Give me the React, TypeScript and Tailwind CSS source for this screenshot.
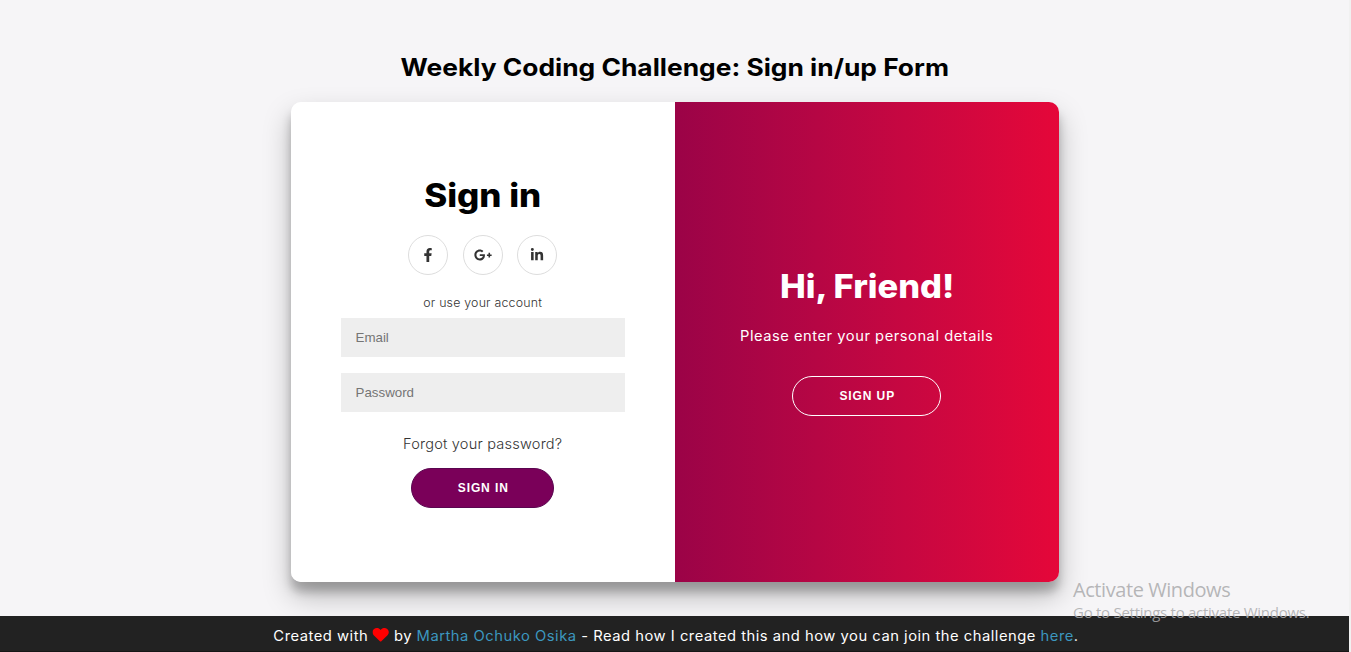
import { FaFacebookF, FaGooglePlusG, FaHeart, FaLinkedinIn } from "react-icons/fa";

const socials = [
  { name: "Facebook", Icon: FaFacebookF, size: 14 },
  { name: "Google Plus", Icon: FaGooglePlusG, size: 18 },
  { name: "LinkedIn", Icon: FaLinkedinIn, size: 14 },
];

function SignInForm() {
  return (
    <form className="flex w-1/2 flex-col items-center bg-white px-[50px] pt-[74px]">
      <h1 className="h-10 scale-x-[1.09] whitespace-nowrap text-[32px] leading-10 font-extrabold">Sign in</h1>
      <div className="mt-[19px] mr-px flex gap-[14.5px]">
        {socials.map(({ name, Icon, size }) => (
          <a
            key={name}
            href="#"
            aria-label={name}
            className="flex size-10 items-center justify-center rounded-full border border-[#ddd] text-[#333]"
          >
            <Icon size={size} />
          </a>
        ))}
      </div>
      <span className="mt-[18px] h-5 scale-x-[1.03] whitespace-nowrap text-[12px] leading-5 font-light tracking-[0.2px] text-[#333]">
        or use your account
      </span>
      <input
        type="email"
        placeholder="Email"
        className="mt-[5px] h-[39px] w-full bg-[#eee] px-[14.5px] font-['Liberation_Sans',Arial,sans-serif] text-[13.33px] placeholder:text-[#757575] placeholder:opacity-100"
      />
      <input
        type="password"
        placeholder="Password"
        className="mt-4 h-[39px] w-full bg-[#eee] px-[14.5px] font-['Liberation_Sans',Arial,sans-serif] text-[13.33px] placeholder:text-[#757575] placeholder:opacity-100"
      />
      <a
        href="#"
        className="mt-[22px] h-5 scale-x-[1.04] whitespace-nowrap text-[14px] leading-5 font-light tracking-[0.2px] text-[#333]"
      >
        Forgot your password?
      </a>
      <button
        type="button"
        className="mt-[14px] mr-px h-10 w-[143px] rounded-[20px] border border-[#5a0650] bg-[#7a0059] pl-[1.5px] font-['Liberation_Sans',Arial,sans-serif] text-[12px] font-bold tracking-[0.9px] text-white"
      >
        SIGN IN
      </button>
    </form>
  );
}

function WelcomePanel() {
  return (
    <section className="flex w-1/2 flex-col items-center bg-linear-to-r from-[#9b0347] to-[#e50739] pt-[165px] text-white">
      <h1 className="h-10 scale-x-[1.075] whitespace-nowrap text-[32px] leading-10 font-extrabold">Hi, Friend!</h1>
      <p className="mt-[19px] h-5 scale-x-105 whitespace-nowrap text-[14px] leading-5 tracking-[0.5px]">
        Please enter your personal details
      </p>
      <button
        type="button"
        className="mt-[30px] mr-px h-10 w-[149px] rounded-[20px] border border-white pl-[1.5px] font-['Liberation_Sans',Arial,sans-serif] text-[12px] font-bold tracking-[0.9px]"
      >
        SIGN UP
      </button>
    </section>
  );
}

export default function App() {
  return (
    <div className="relative flex h-[652px] w-[1351px] overflow-hidden bg-[#f6f5f7] font-[Inter,sans-serif] text-black">
      <div className="flex w-[1349px] shrink-0 flex-col">
        <main className="flex w-[1350px] grow flex-col items-center">
          <h2 className="mt-[52px] h-8 scale-x-[1.098] whitespace-nowrap text-[24px] leading-8 font-bold">
            Weekly Coding Challenge: Sign in/up Form
          </h2>
          <div className="mt-[18px] flex h-[480px] w-[768px] overflow-hidden rounded-[10px] shadow-[0_14px_28px_rgba(0,0,0,0.25),0_10px_10px_rgba(0,0,0,0.22)]">
            <SignInForm />
            <WelcomePanel />
          </div>
        </main>
        <footer className="flex h-9 justify-center border-b border-[#161616] bg-[#222] pl-[2px] text-[14px] tracking-[0.48px] text-white">
          <div className="flex scale-x-[1.054] items-center whitespace-pre pt-[3px]">
            <span>Created with </span>
            <FaHeart size={15.5} className="text-[#f00]" />
            <span> by </span>
            <a href="#" className="text-[#3c97bf]">Martha Ochuko Osika</a>
            <span> - Read how I created this and how you can join the challenge </span>
            <a href="#" className="text-[#3c97bf]">here</a>
            <span>.</span>
          </div>
        </footer>
      </div>
      <div className="w-0.5 shrink-0 bg-[#f1f1f1]" />
      <div className="pointer-events-none absolute top-[578px] left-[1073px] font-['Open_Sans',sans-serif] whitespace-nowrap text-[#aaaaac]/85">
        <p className="text-[20px] leading-6 tracking-[-0.43px]">Activate Windows</p>
        <p className="text-[15px] leading-5 tracking-[-0.27px]">Go to Settings to activate Windows.</p>
      </div>
    </div>
  );
}
